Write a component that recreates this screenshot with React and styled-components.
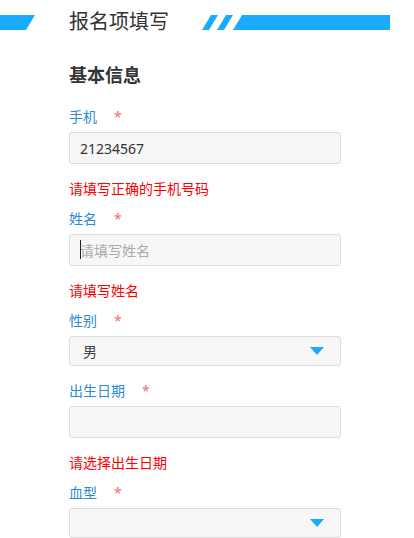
import React from "react";
import styled, { createGlobalStyle } from "styled-components";

const GlobalStyle = createGlobalStyle`
  html, body { margin: 0; padding: 0; background: #fff; }
  body { font-family: "Noto Sans", "Noto Sans CJK SC", sans-serif; }
`;

const BLUE = "#1aabff";

const Page = styled.div`
  width: 414px;
  min-height: 538px;
  background: #fff;
`;

const Header = styled.header`
  display: flex;
  align-items: center;
  padding-top: 7px;
  height: 30px;
`;

const Title = styled.h1`
  margin: 0 33px 0 34px;
  font-size: 20px;
  line-height: 30px;
  font-weight: 400;
  color: #333;
  white-space: nowrap;
`;

const Deco = styled.svg`
  display: block;
  flex: none;
`;

const Content = styled.main`
  padding-left: 69px;
  width: 272px;
`;

const SectionTitle = styled.h2`
  margin: 26px 0 20px;
  font-size: 18px;
  line-height: 24px;
  font-weight: 700;
  color: #333;
`;

const Field = styled.div`
  display: flex;
  flex-direction: column;
  margin-bottom: ${(p) => (p.$hasError ? "10px" : "15px")};
`;

const Label = styled.label`
  display: flex;
  align-items: flex-start;
  font-size: 14px;
  line-height: 20px;
  color: #2b8ad3;
  margin-bottom: 5px;
`;

const Required = styled.span`
  margin-left: 17px;
  color: #f56c6c;
  font-size: 14px;
`;

const Control = styled.div`
  position: relative;
  box-sizing: border-box;
  height: ${(p) => (p.$select ? "30px" : "32px")};
  border: 1px solid #dcdcdc;
  border-radius: 3px;
  background: #f7f7f7;
  display: flex;
  align-items: center;
`;

const TextInput = styled.input`
  flex: 1;
  min-width: 0;
  height: 100%;
  box-sizing: border-box;
  border: none;
  outline: none;
  background: transparent;
  padding: 0 10px;
  font-family: "Noto Sans", "Noto Sans CJK SC", sans-serif;
  font-size: 14px;
  color: #333;
  &::placeholder {
    color: #aaa;
  }
`;

const Caret = styled.span`
  position: absolute;
  left: 10px;
  top: 5px;
  width: 1px;
  height: 19px;
  background: #222;
`;

const SelectValue = styled.span`
  flex: 1;
  padding-left: 13px;
  font-size: 14px;
  color: #444;
`;

const Arrow = styled.svg`
  margin-right: 16px;
  flex: none;
`;

const ErrorText = styled.div`
  margin-top: 15px;
  font-size: 14px;
  line-height: 20px;
  color: #ff0000;
`;

const LeftBar = () => (
  <Deco width="35" height="15" viewBox="0 0 35 15">
    <polygon points="0,0 35,0 26,15 0,15" fill={BLUE} />
  </Deco>
);

const RightBar = () => (
  <Deco width="188" height="15" viewBox="0 0 188 15">
    <polygon points="9,0 16,0 7,15 0,15" fill={BLUE} />
    <polygon points="24,0 31,0 22,15 15,15" fill={BLUE} />
    <polygon points="40,0 188,0 188,15 31,15" fill={BLUE} />
  </Deco>
);

const DownArrow = () => (
  <Arrow width="14" height="8" viewBox="0 0 14 8">
    <polygon points="0,0 14,0 7,8" fill={BLUE} />
  </Arrow>
);

const FieldLabel = ({ children }) => (
  <Label>
    {children}
    <Required>*</Required>
  </Label>
);

export default function App() {
  return (
    <Page>
      <GlobalStyle />
      <Header>
        <LeftBar />
        <Title>报名项填写</Title>
        <RightBar />
      </Header>
      <Content>
        <SectionTitle>基本信息</SectionTitle>

        <Field $hasError>
          <FieldLabel>手机</FieldLabel>
          <Control>
            <TextInput defaultValue="21234567" readOnly />
          </Control>
          <ErrorText>请填写正确的手机号码</ErrorText>
        </Field>

        <Field $hasError>
          <FieldLabel>姓名</FieldLabel>
          <Control>
            <TextInput placeholder="请填写姓名" readOnly />
            <Caret />
          </Control>
          <ErrorText>请填写姓名</ErrorText>
        </Field>

        <Field>
          <FieldLabel>性别</FieldLabel>
          <Control $select>
            <SelectValue>男</SelectValue>
            <DownArrow />
          </Control>
        </Field>

        <Field $hasError>
          <FieldLabel>出生日期</FieldLabel>
          <Control>
            <TextInput readOnly />
          </Control>
          <ErrorText>请选择出生日期</ErrorText>
        </Field>

        <Field>
          <FieldLabel>血型</FieldLabel>
          <Control $select>
            <SelectValue />
            <DownArrow />
          </Control>
        </Field>
      </Content>
    </Page>
  );
}
